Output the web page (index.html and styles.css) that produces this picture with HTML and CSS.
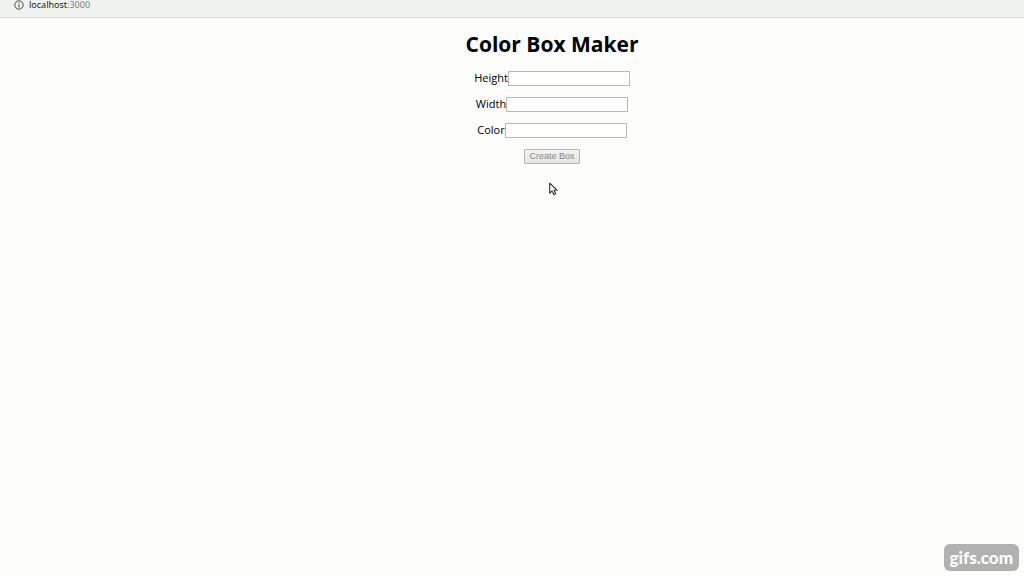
FILE: index.html
```html
<!DOCTYPE html>
<html lang="en">
<head>
<meta charset="utf-8">
<title>Color Box Maker</title>
<link rel="stylesheet" href="styles.css">
</head>
<body>
<header class="address-bar">
  <svg class="info-icon" viewBox="0 0 10 10" aria-hidden="true">
    <circle cx="5" cy="5" r="4.2" fill="none" stroke="#484b4a" stroke-width="1"/>
    <path d="M5 4.4V7.4M5 2.6V3.6" stroke="#484b4a" stroke-width="1.1"/>
  </svg>
  <span class="address"><span class="host">localhost</span>:3000</span>
</header>
<main class="page">
  <h1 class="title">Color Box Maker</h1>
  <form class="form">
    <div class="field"><label for="height">Height</label><input class="text-box" id="height" type="text"></div>
    <div class="field"><label for="width">Width</label><input class="text-box" id="width" type="text"></div>
    <div class="field"><label for="color">Color</label><input class="text-box" id="color" type="text"></div>
    <button class="create" type="button" disabled>Create Box</button>
  </form>
</main>
<svg class="cursor" viewBox="0 0 10 14" aria-hidden="true">
  <path d="M1.7 1.2V11.2L4.1 9L5.8 12.6L7.7 11.7L6.1 8.3H9.1Z" fill="#fff" stroke="#303030" stroke-width="1.1" stroke-linejoin="round"/>
</svg>
<div class="watermark">gifs.com</div>
</body>
</html>
```
FILE: styles.css
```css
* {
  box-sizing: border-box;
}

body {
  margin: 0;
  min-height: 100vh;
  background: #fdfefc;
  color: #000;
  font-family: "Open Sans", "Noto Sans", sans-serif;
  font-size: 11px;
}

.address-bar {
  display: flex;
  align-items: flex-start;
  gap: 5px;
  height: 18px;
  padding-left: 14px;
  background: #eef3f0;
  border-bottom: 1px solid #dce0dd;
}

.info-icon {
  width: 10px;
  height: 10px;
}

.address {
  color: #7c807e;
  font-family: "Noto Sans", sans-serif;
  font-size: 9px;
  line-height: 10px;
}

.host {
  color: #202322;
}

.page {
  display: flex;
  flex-direction: column;
  align-items: center;
  padding: 12px 0 0 80px;
}

.title {
  margin: 0;
  font-size: 21px;
  line-height: 28px;
}

.form {
  display: flex;
  flex-direction: column;
  align-items: center;
  gap: 11px;
  margin-top: 13px;
}

.field {
  display: flex;
  align-items: flex-start;
  height: 15px;
  line-height: 13px;
}

.text-box {
  width: 122px;
  height: 15px;
  padding: 0 2px;
  border: 1px solid #b8b9b8;
  background: #fff;
  font-size: 10px;
}

.create {
  width: 56px;
  height: 15px;
  padding: 0;
  border: 1px solid #b4b5b4;
  border-radius: 1px;
  background: linear-gradient(#f3f3f2, #e4e5e4);
  color: #878887;
  font-family: "Liberation Sans", Arial, sans-serif;
  font-size: 9px;
  line-height: 13px;
}

.cursor {
  position: absolute;
  top: 182px;
  left: 548px;
  width: 10px;
  height: 14px;
}

.watermark {
  position: fixed;
  right: 5px;
  bottom: 5px;
  padding: 0 6px;
  border-radius: 6px;
  background: #b0b1b0;
  color: #fff;
  font-family: Lato, sans-serif;
  font-size: 17px;
  font-weight: 900;
  line-height: 27px;
}
```
